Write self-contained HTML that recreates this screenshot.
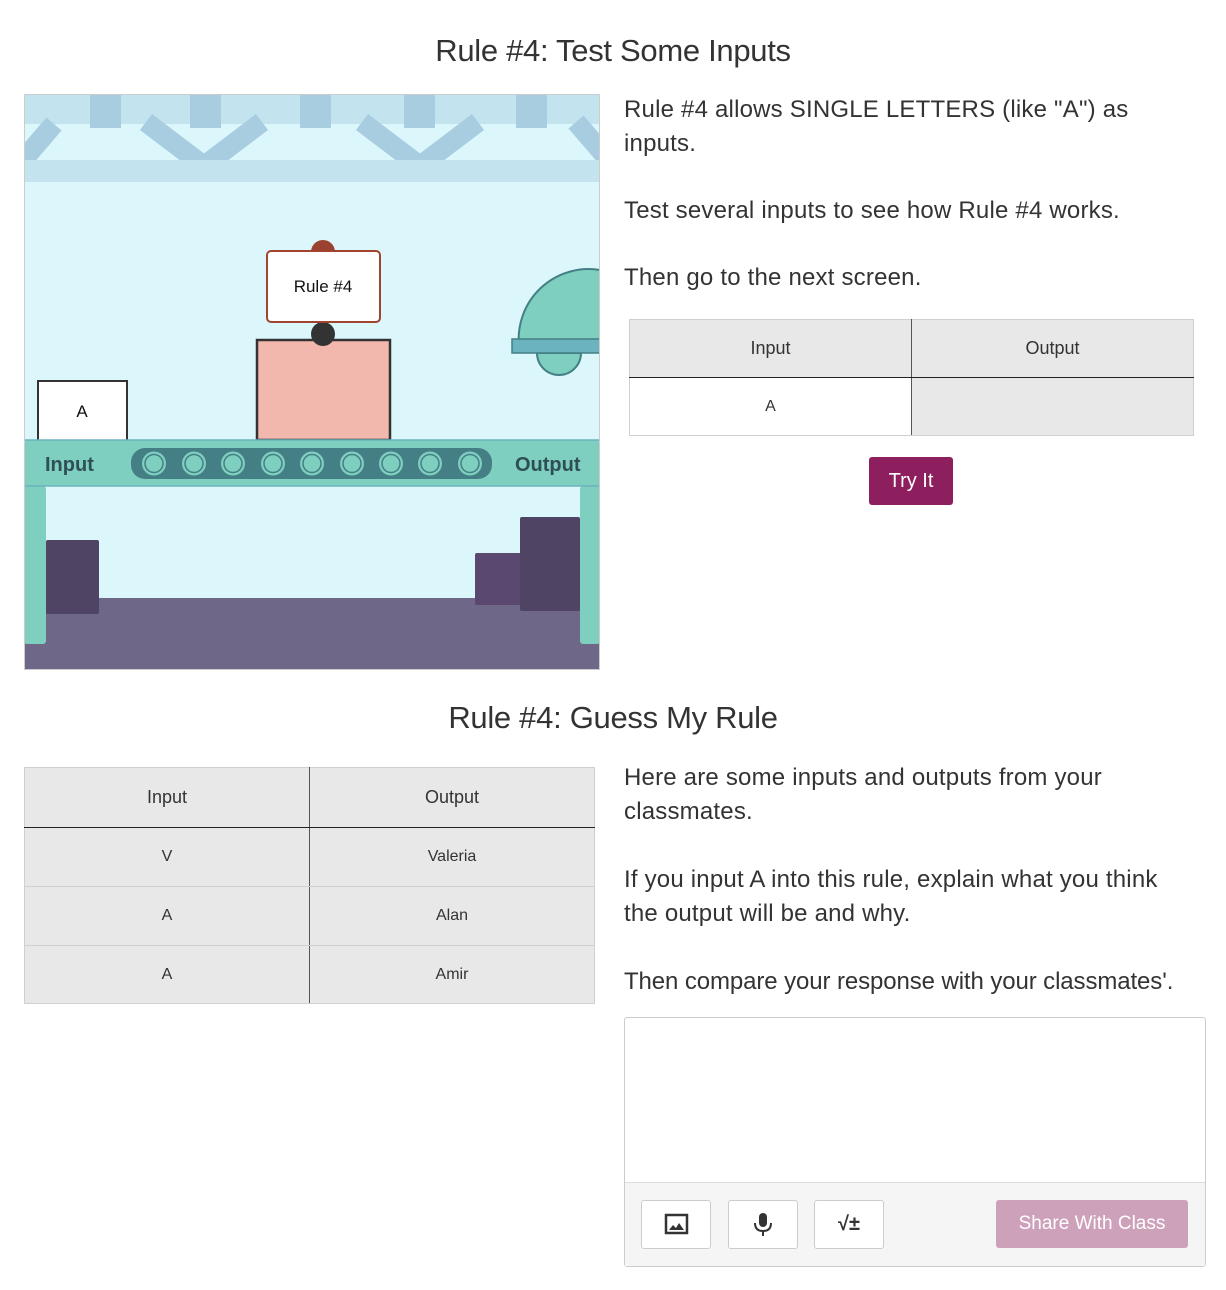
<!DOCTYPE html>
<html><head><meta charset="utf-8"><style>
body{margin:0;width:1226px;height:1290px;background:#fff;font-family:"Liberation Sans",sans-serif;color:#333;position:relative;overflow:hidden}
.a{position:absolute;white-space:nowrap}
h1{position:absolute;margin:0;font-weight:normal;font-size:31px;width:1226px;text-align:center;letter-spacing:-0.3px}
.p{font-size:24px;letter-spacing:0.2px;color:#333}
table{position:absolute;border-collapse:collapse;font-size:16px;color:#333}
td,th{text-align:center;border:1px solid #d0d0d0}
th{font-weight:normal;font-size:18px;background:#e8e8e8;border-bottom:1.5px solid #222}
.btn{position:absolute;top:1200px;width:68px;height:47px;border:1px solid #ccc;border-radius:3px;background:#fff}
</style></head><body>
<h1 style="top:33px">Rule #4: Test Some Inputs</h1>
<svg class="a" style="left:24px;top:94px" width="576" height="576" viewBox="0 0 576 576">
<rect width="576" height="576" fill="#dbf7fc"/>
<rect width="576" height="30" fill="#c3e3ef"/>
<g fill="#a8cde0"><rect x="66" width="31" height="34"/><rect x="166" width="31" height="34"/><rect x="276" width="31" height="34"/><rect x="380" width="31" height="34"/><rect x="492" width="31" height="34"/></g>
<g stroke="#a8cde0" stroke-width="20" fill="none"><path d="M-6 72 L30 30 M122 28 L180 72 L238 28 M338 28 L396 72 L454 28 M552 28 L590 72"/></g>
<rect y="66" width="576" height="22" fill="#c3e3ef"/>
<rect y="504" width="576" height="72" fill="#6e6788"/>
<rect x="22" y="446" width="53" height="74" rx="2" fill="#4f4463"/>
<rect x="451" y="459" width="50" height="52" rx="2" fill="#5a4870"/>
<rect x="496" y="423" width="60" height="94" rx="2" fill="#4f4463"/>
<rect x="0" y="392" width="22" height="158" rx="3" fill="#7ecfbf"/>
<rect x="556" y="392" width="20" height="158" rx="3" fill="#7ecfbf"/>
<path d="M495 252 A70 70 0 0 1 576 176 L576 252 Z" fill="#7ecfbf" stroke="#457f86" stroke-width="2"/>
<path d="M513 259 A22 22 0 0 0 557 259 Z" fill="#7ecfbf" stroke="#457f86" stroke-width="2"/>
<rect x="488" y="245" width="90" height="14" fill="#6ab3bf" stroke="#457f86" stroke-width="1.5"/>
<rect x="14" y="287" width="89" height="60" fill="#fff" stroke="#333" stroke-width="2"/>
<text x="58" y="323" font-size="17" text-anchor="middle" fill="#111" font-family="Liberation Sans">A</text>
<rect x="233" y="246" width="133" height="100" fill="#f2b8ae" stroke="#333" stroke-width="2.5"/>
<circle cx="299" cy="240" r="12" fill="#333"/>
<circle cx="299" cy="158" r="12" fill="#9a412f"/>
<rect x="243" y="157" width="113" height="71" rx="4" fill="#fff" stroke="#a0442f" stroke-width="2"/>
<text x="299" y="198" font-size="17" text-anchor="middle" fill="#111" font-family="Liberation Sans">Rule #4</text>
<rect x="0" y="346" width="576" height="46" fill="#7ecfbf" stroke="#6ab3bf" stroke-width="1.5"/>
<rect x="107" y="354" width="361" height="31" rx="14" fill="#457f86"/>
<g fill="#7ecfbf"><circle cx="130" cy="369.5" r="12"/><circle cx="170" cy="369.5" r="12"/><circle cx="209" cy="369.5" r="12"/><circle cx="249" cy="369.5" r="12"/><circle cx="288" cy="369.5" r="12"/><circle cx="328" cy="369.5" r="12"/><circle cx="367" cy="369.5" r="12"/><circle cx="406" cy="369.5" r="12"/><circle cx="446" cy="369.5" r="12"/></g>
<g fill="none" stroke="#457f86" stroke-width="1.5"><circle cx="130" cy="369.5" r="9"/><circle cx="170" cy="369.5" r="9"/><circle cx="209" cy="369.5" r="9"/><circle cx="249" cy="369.5" r="9"/><circle cx="288" cy="369.5" r="9"/><circle cx="328" cy="369.5" r="9"/><circle cx="367" cy="369.5" r="9"/><circle cx="406" cy="369.5" r="9"/><circle cx="446" cy="369.5" r="9"/></g>
<text x="21" y="377" font-size="20" font-weight="bold" fill="#2f4f57" font-family="Liberation Sans">Input</text>
<text x="491" y="377" font-size="20" font-weight="bold" fill="#2f4f57" font-family="Liberation Sans">Output</text>
<rect x="0.5" y="0.5" width="575" height="575" fill="none" stroke="#ccc"/>
</svg>
<div class="a p" style="left:624px;top:96px">Rule #4 allows SINGLE LETTERS (like "A") as</div>
<div class="a p" style="left:624px;top:130px">inputs.</div>
<div class="a p" style="left:624px;top:197px">Test several inputs to see how Rule #4 works.</div>
<div class="a p" style="left:624px;top:264px">Then go to the next screen.</div>
<table style="left:629px;top:319px;width:565px">
<tr style="height:58px"><th style="width:50%;border-right:1.5px solid #555">Input</th><th>Output</th></tr>
<tr style="height:58px"><td style="background:#fff;border-right:1.5px solid #555">A</td><td style="background:#e8e8e8"></td></tr>
</table>
<div class="a" style="left:869px;top:457px;width:84px;height:48px;background:#8e1f5f;border-radius:3px;color:#fff;font-size:20px;line-height:48px;text-align:center">Try It</div>
<h1 style="top:700px">Rule #4: Guess My Rule</h1>
<table style="left:24px;top:767px;width:571px;background:#e8e8e8">
<tr style="height:60px"><th style="width:50%;border-right:1.5px solid #555">Input</th><th>Output</th></tr>
<tr style="height:59px"><td style="border-right:1.5px solid #555">V</td><td>Valeria</td></tr>
<tr style="height:59px"><td style="border-right:1.5px solid #555">A</td><td>Alan</td></tr>
<tr style="height:58px"><td style="border-right:1.5px solid #555">A</td><td>Amir</td></tr>
</table>
<div class="a p" style="left:624px;top:764px">Here are some inputs and outputs from your</div>
<div class="a p" style="left:624px;top:798px">classmates.</div>
<div class="a p" style="left:624px;top:866px">If you input A into this rule, explain what you think</div>
<div class="a p" style="left:624px;top:900px">the output will be and why.</div>
<div class="a p" style="left:624px;top:968px;letter-spacing:-0.1px">Then compare your response with your classmates'.</div>
<div class="a" style="left:624px;top:1017px;width:580px;height:248px;border:1px solid #ccc;border-radius:3px;background:#fff"></div>
<div class="a" style="left:625px;top:1182px;width:580px;height:83px;border-top:1px solid #ddd;background:#f5f5f5"></div>
<div class="btn" style="left:641px"><svg width="68" height="47"><rect x="24" y="14" width="21" height="18" fill="none" stroke="#333" stroke-width="2.5"/><path d="M27 29 L31 24 L34 27 L37 22 L42 29 Z" fill="#333"/></svg></div>
<div class="btn" style="left:728px"><svg width="68" height="47"><rect x="30" y="12" width="8" height="14" rx="4" fill="#333"/><path d="M26 22 Q26 30 34 30 Q42 30 42 22" fill="none" stroke="#333" stroke-width="2"/><path d="M34 30 V35" stroke="#333" stroke-width="2"/></svg></div>
<div class="btn" style="left:814px"><div style="font-size:20px;font-weight:bold;text-align:center;line-height:47px;color:#333">√±</div></div>
<div class="a" style="left:996px;top:1200px;width:192px;height:48px;background:#cea1bb;border-radius:3px;color:#fff;font-size:19px;line-height:48px;text-align:center">Share With Class</div>
</body></html>
